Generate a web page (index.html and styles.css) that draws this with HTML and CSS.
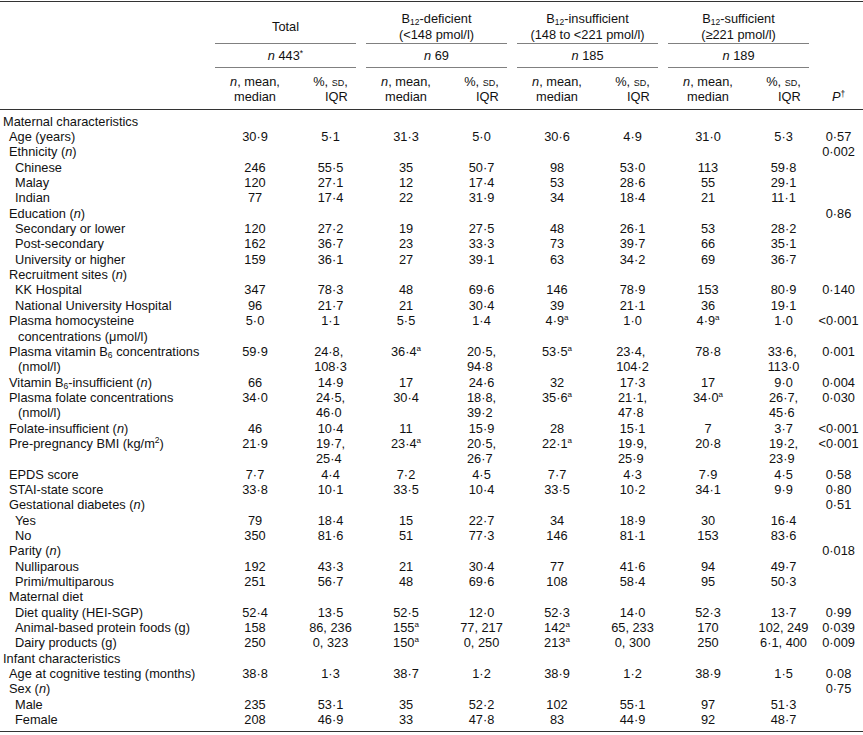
FILE: index.html
```html
<!DOCTYPE html>
<html lang="en">
<head>
<meta charset="utf-8">
<title>Table</title>
<link rel="stylesheet" href="styles.css">
</head>
<body>
<table class="tbl">
  <colgroup>
    <col class="c-label">
    <col class="c-n"><col class="c-p">
    <col class="c-n"><col class="c-p">
    <col class="c-n"><col class="c-p">
    <col class="c-n"><col class="c-p">
    <col class="c-pv">
  </colgroup>
  <thead>
    <tr class="h1">
      <th></th>
      <th colspan="2" class="grp"><div class="grp-in tall"><span>Total</span></div></th>
      <th colspan="2" class="grp"><div class="grp-in tall"><span>B<sub>12</sub>-deficient</span><span>(&lt;148 pmol/l)</span></div></th>
      <th colspan="2" class="grp"><div class="grp-in tall"><span>B<sub>12</sub>-insufficient</span><span>(148 to &lt;221 pmol/l)</span></div></th>
      <th colspan="2" class="grp"><div class="grp-in tall"><span>B<sub>12</sub>-sufficient</span><span>(&ge;221 pmol/l)</span></div></th>
      <th></th>
    </tr>
    <tr class="h2">
      <th></th>
      <th colspan="2" class="grp"><div class="grp-in short"><span><i>n</i> 443<sup class="ast">*</sup></span></div></th>
      <th colspan="2" class="grp"><div class="grp-in short"><span><i>n</i> 69</span></div></th>
      <th colspan="2" class="grp"><div class="grp-in short"><span><i>n</i> 185</span></div></th>
      <th colspan="2" class="grp"><div class="grp-in short"><span><i>n</i> 189</span></div></th>
      <th></th>
    </tr>
    <tr class="h3">
      <th></th>
      <th class="sub"><span class="blk-c"><i>n</i>, mean,<br>median</span></th>
      <th class="sub"><span class="blk-r">%, <span class="sc">sd</span>,<br>IQR</span></th>
      <th class="sub"><span class="blk-c"><i>n</i>, mean,<br>median</span></th>
      <th class="sub"><span class="blk-r">%, <span class="sc">sd</span>,<br>IQR</span></th>
      <th class="sub"><span class="blk-c"><i>n</i>, mean,<br>median</span></th>
      <th class="sub"><span class="blk-r">%, <span class="sc">sd</span>,<br>IQR</span></th>
      <th class="sub"><span class="blk-c"><i>n</i>, mean,<br>median</span></th>
      <th class="sub"><span class="blk-r">%, <span class="sc">sd</span>,<br>IQR</span></th>
      <th class="sub"><i>P</i><sup class="dag">&dagger;</sup></th>
    </tr>
  </thead>
  <tbody>
    <tr><td class="lb l0">Maternal characteristics</td><td></td><td></td><td></td><td></td><td></td><td></td><td></td><td></td><td></td></tr>
    <tr><td class="lb l1">Age (years)</td><td>30·9</td><td>5·1</td><td>31·3</td><td>5·0</td><td>30·6</td><td>4·9</td><td>31·0</td><td>5·3</td><td>0·57</td></tr>
    <tr><td class="lb l1">Ethnicity (<i>n</i>)</td><td></td><td></td><td></td><td></td><td></td><td></td><td></td><td></td><td>0·002</td></tr>
    <tr><td class="lb l2">Chinese</td><td>246</td><td>55·5</td><td>35</td><td>50·7</td><td>98</td><td>53·0</td><td>113</td><td>59·8</td><td></td></tr>
    <tr><td class="lb l2">Malay</td><td>120</td><td>27·1</td><td>12</td><td>17·4</td><td>53</td><td>28·6</td><td>55</td><td>29·1</td><td></td></tr>
    <tr><td class="lb l2">Indian</td><td>77</td><td>17·4</td><td>22</td><td>31·9</td><td>34</td><td>18·4</td><td>21</td><td>11·1</td><td></td></tr>
    <tr><td class="lb l1">Education (<i>n</i>)</td><td></td><td></td><td></td><td></td><td></td><td></td><td></td><td></td><td>0·86</td></tr>
    <tr><td class="lb l2">Secondary or lower</td><td>120</td><td>27·2</td><td>19</td><td>27·5</td><td>48</td><td>26·1</td><td>53</td><td>28·2</td><td></td></tr>
    <tr><td class="lb l2">Post-secondary</td><td>162</td><td>36·7</td><td>23</td><td>33·3</td><td>73</td><td>39·7</td><td>66</td><td>35·1</td><td></td></tr>
    <tr><td class="lb l2">University or higher</td><td>159</td><td>36·1</td><td>27</td><td>39·1</td><td>63</td><td>34·2</td><td>69</td><td>36·7</td><td></td></tr>
    <tr><td class="lb l1">Recruitment sites (<i>n</i>)</td><td></td><td></td><td></td><td></td><td></td><td></td><td></td><td></td><td></td></tr>
    <tr><td class="lb l2">KK Hospital</td><td>347</td><td>78·3</td><td>48</td><td>69·6</td><td>146</td><td>78·9</td><td>153</td><td>80·9</td><td>0·140</td></tr>
    <tr><td class="lb l2">National University Hospital</td><td>96</td><td>21·7</td><td>21</td><td>30·4</td><td>39</td><td>21·1</td><td>36</td><td>19·1</td><td></td></tr>
    <tr><td class="lb l1">Plasma homocysteine<br>concentrations (μmol/l)</td><td>5·0</td><td>1·1</td><td>5·5</td><td>1·4</td><td>4·9<sup>a</sup></td><td>1·0</td><td>4·9<sup>a</sup></td><td>1·0</td><td>&lt;0·001</td></tr>
    <tr><td class="lb l1">Plasma vitamin B<sub>6</sub> concentrations<br>(nmol/l)</td><td>59·9</td><td><span class="ml">24·8,<br>108·3</span></td><td>36·4<sup>a</sup></td><td><span class="ml">20·5,<br>94·8</span></td><td>53·5<sup>a</sup></td><td><span class="ml">23·4,<br>104·2</span></td><td>78·8</td><td><span class="ml">33·6,<br>113·0</span></td><td>0·001</td></tr>
    <tr><td class="lb l1">Vitamin B<sub>6</sub>-insufficient (<i>n</i>)</td><td>66</td><td>14·9</td><td>17</td><td>24·6</td><td>32</td><td>17·3</td><td>17</td><td>9·0</td><td>0·004</td></tr>
    <tr><td class="lb l1">Plasma folate concentrations<br>(nmol/l)</td><td>34·0</td><td><span class="ml">24·5,<br>46·0</span></td><td>30·4</td><td><span class="ml">18·8,<br>39·2</span></td><td>35·6<sup>a</sup></td><td><span class="ml">21·1,<br>47·8</span></td><td>34·0<sup>a</sup></td><td><span class="ml">26·7,<br>45·6</span></td><td>0·030</td></tr>
    <tr><td class="lb l1">Folate-insufficient (<i>n</i>)</td><td>46</td><td>10·4</td><td>11</td><td>15·9</td><td>28</td><td>15·1</td><td>7</td><td>3·7</td><td>&lt;0·001</td></tr>
    <tr><td class="lb l1">Pre-pregnancy BMI (kg/m<sup class="pw">2</sup>)</td><td>21·9</td><td><span class="ml">19·7,<br>25·4</span></td><td>23·4<sup>a</sup></td><td><span class="ml">20·5,<br>26·7</span></td><td>22·1<sup>a</sup></td><td><span class="ml">19·9,<br>25·9</span></td><td>20·8</td><td><span class="ml">19·2,<br>23·9</span></td><td>&lt;0·001</td></tr>
    <tr><td class="lb l1">EPDS score</td><td>7·7</td><td>4·4</td><td>7·2</td><td>4·5</td><td>7·7</td><td>4·3</td><td>7·9</td><td>4·5</td><td>0·58</td></tr>
    <tr><td class="lb l1">STAI-state score</td><td>33·8</td><td>10·1</td><td>33·5</td><td>10·4</td><td>33·5</td><td>10·2</td><td>34·1</td><td>9·9</td><td>0·80</td></tr>
    <tr><td class="lb l1">Gestational diabetes (<i>n</i>)</td><td></td><td></td><td></td><td></td><td></td><td></td><td></td><td></td><td>0·51</td></tr>
    <tr><td class="lb l2">Yes</td><td>79</td><td>18·4</td><td>15</td><td>22·7</td><td>34</td><td>18·9</td><td>30</td><td>16·4</td><td></td></tr>
    <tr><td class="lb l2">No</td><td>350</td><td>81·6</td><td>51</td><td>77·3</td><td>146</td><td>81·1</td><td>153</td><td>83·6</td><td></td></tr>
    <tr><td class="lb l1">Parity (<i>n</i>)</td><td></td><td></td><td></td><td></td><td></td><td></td><td></td><td></td><td>0·018</td></tr>
    <tr><td class="lb l2">Nulliparous</td><td>192</td><td>43·3</td><td>21</td><td>30·4</td><td>77</td><td>41·6</td><td>94</td><td>49·7</td><td></td></tr>
    <tr><td class="lb l2">Primi/multiparous</td><td>251</td><td>56·7</td><td>48</td><td>69·6</td><td>108</td><td>58·4</td><td>95</td><td>50·3</td><td></td></tr>
    <tr><td class="lb l1">Maternal diet</td><td></td><td></td><td></td><td></td><td></td><td></td><td></td><td></td><td></td></tr>
    <tr><td class="lb l2">Diet quality (HEI-SGP)</td><td>52·4</td><td>13·5</td><td>52·5</td><td>12·0</td><td>52·3</td><td>14·0</td><td>52·3</td><td>13·7</td><td>0·99</td></tr>
    <tr><td class="lb l2">Animal-based protein foods (g)</td><td>158</td><td>86, 236</td><td>155<sup>a</sup></td><td>77, 217</td><td>142<sup>a</sup></td><td>65, 233</td><td>170</td><td>102, 249</td><td>0·039</td></tr>
    <tr><td class="lb l2">Dairy products (g)</td><td>250</td><td>0, 323</td><td>150<sup>a</sup></td><td>0, 250</td><td>213<sup>a</sup></td><td>0, 300</td><td>250</td><td>6·1, 400</td><td>0·009</td></tr>
    <tr><td class="lb l0">Infant characteristics</td><td></td><td></td><td></td><td></td><td></td><td></td><td></td><td></td><td></td></tr>
    <tr><td class="lb l1">Age at cognitive testing (months)</td><td>38·8</td><td>1·3</td><td>38·7</td><td>1·2</td><td>38·9</td><td>1·2</td><td>38·9</td><td>1·5</td><td>0·08</td></tr>
    <tr><td class="lb l1">Sex (<i>n</i>)</td><td></td><td></td><td></td><td></td><td></td><td></td><td></td><td></td><td>0·75</td></tr>
    <tr><td class="lb l2">Male</td><td>235</td><td>53·1</td><td>35</td><td>52·2</td><td>102</td><td>55·1</td><td>97</td><td>51·3</td><td></td></tr>
    <tr><td class="lb l2">Female</td><td>208</td><td>46·9</td><td>33</td><td>47·8</td><td>83</td><td>44·9</td><td>92</td><td>48·7</td><td></td></tr>
  </tbody>
</table>
</body>
</html>
```

FILE: styles.css
```css
html, body {
  margin: 0;
  padding: 0;
  background: #ffffff;
}

body {
  padding-top: 1px;
  font-family: "Liberation Sans", Arial, Helvetica, sans-serif;
  font-size: 12.8px;
  line-height: 15.35px;
  color: #111111;
}

.tbl {
  width: 863px;
  border-collapse: collapse;
  table-layout: fixed;
  border-top: 1px solid #333333;
}

.c-label { width: 210px; }
.c-n { width: 90px; }
.c-p { width: 61px; }
.c-pv { width: 49px; }

th, td {
  padding: 0;
  font-weight: normal;
  text-align: center;
  vertical-align: top;
  white-space: nowrap;
}

/* group header rows */
.grp {
  padding: 0 5px;
}

.grp-in {
  box-sizing: border-box;
  border-bottom: 1px solid #808080;
  display: flex;
  flex-direction: column;
  align-items: center;
  justify-content: center;
}

.grp-in.tall {
  height: 42px;
  padding-top: 8px;
}

.grp-in.short {
  height: 24px;
  padding: 3px 0 3px;
}

/* sub header row */
.h3 th {
  padding: 6px 0 4px;
  vertical-align: bottom;
  border-bottom: 1px solid #333333;
}

.blk-c {
  display: inline-block;
  text-align: center;
}

.blk-r {
  display: inline-block;
  text-align: right;
}

.sc {
  font-variant: small-caps;
}

sub {
  font-size: 8.5px;
  line-height: 0;
  vertical-align: -2px;
}

sup {
  font-size: 8px;
  line-height: 0;
  vertical-align: 5px;
}

sup.pw {
  font-size: 8.5px;
}

sup.ast,
sup.dag {
  font-size: 8.5px;
  vertical-align: 4px;
}

/* body */
tbody tr:first-child td {
  padding-top: 4px;
}

tbody tr:last-child td {
  padding-bottom: 4px;
  border-bottom: 1px solid #333333;
}

.lb {
  text-align: left;
}

.l0 { padding-left: 3px; }

.l1 {
  padding-left: 18px;
  text-indent: -9px;
}

.l2 { padding-left: 15px; }

.ml {
  display: inline-block;
  text-align: left;
}
```
